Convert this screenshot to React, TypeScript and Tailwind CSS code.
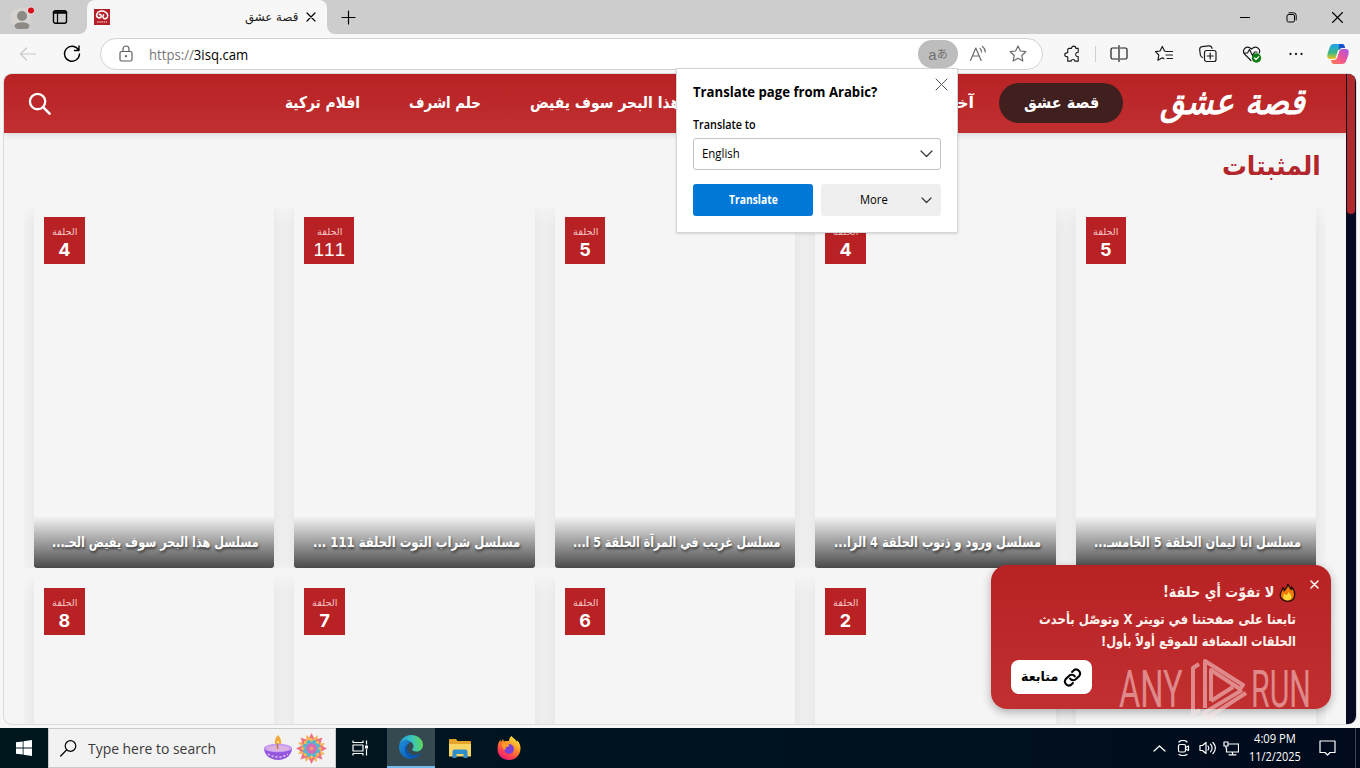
import React, { useLayoutEffect, useRef, useState } from "react";
import clsx from "clsx";

type FitProps = {
  children: React.ReactNode;
  className?: string;
  rtl?: boolean;
};

// Squeezes or stretches one line of text to the width of its box.
const Fit: React.FC<FitProps> = ({ children, className, rtl }) => {
  const outer = useRef<HTMLSpanElement>(null);
  const inner = useRef<HTMLSpanElement>(null);
  const [scale, setScale] = useState(1);

  useLayoutEffect(() => {
    if (!outer.current || !inner.current) return;
    setScale(outer.current.clientWidth / inner.current.offsetWidth);
  }, []);

  return (
    <span
      ref={outer}
      dir="ltr"
      className={clsx("block shrink-0 whitespace-nowrap", className)}
    >
      <span
        ref={inner}
        dir={rtl ? "rtl" : "ltr"}
        className="inline-block origin-left"
        style={{ transform: `scaleX(${scale})` }}
      >
        {children}
      </span>
    </span>
  );
};

const arabic = "font-['DejaVu_Sans',sans-serif]";
const ui = "font-['Open_Sans','Noto_Sans',sans-serif]";

type IconProps = {
  className?: string;
  children: React.ReactNode;
  box?: string;
};

const Icon: React.FC<IconProps> = ({
  className = "size-5",
  box = "0 0 20 20",
  children,
}) => (
  <svg
    viewBox={box}
    fill="none"
    stroke="currentColor"
    strokeWidth="1.2"
    strokeLinecap="round"
    strokeLinejoin="round"
    className={clsx("shrink-0", className)}
  >
    {children}
  </svg>
);

const TabStrip = () => (
  <div className="flex h-[34px] bg-[#f7f7f7]">
    <div className="flex w-[87px] items-center rounded-br-lg bg-[#cdcdcd] pl-[10px]">
      <svg viewBox="0 0 24 24" className="size-6">
        <circle cx="11" cy="13" r="10.5" fill="#d6d3d1" />
        <circle cx="12" cy="11" r="5" fill="#8d8985" />
        <ellipse cx="12" cy="21" rx="7.500" ry="3.800" fill="#8d8985" />
        <circle cx="21" cy="5.500" r="4" fill="#e8d6d6" />
        <circle cx="21" cy="5.500" r="3" fill="#d80f1e" />
      </svg>
      <Icon className="ml-[18px] size-4 text-black" box="0 0 16 16">
        <rect x="1.500" y="1.800" width="13" height="12.500" rx="2" strokeWidth="1.400" />
        <path d="M2 3.500h12" strokeWidth="2.600" />
        <path d="M5.500 4v10" />
      </Icon>
    </div>
    <div className="bg-[#cdcdcd]">
      <div className="flex h-[34px] w-[240px] items-center rounded-t-lg bg-[#f7f7f7] pl-[7px] text-[#1a1a1a]">
        <svg viewBox="0 0 16 16" className="size-4">
          <path d="M0 0h16v16H0z" fill="#b3202a" />
          <path
            d="M4 8.500C1.500 7 2.500 3 6 2.300c4-.8 8 1.200 7.700 4.700-.2 2.500-3 3.500-4.300 2-1-1.300-.4-3 .8-3.200M4 8.500c2 1 3.500-.2 3.200-2-.2-1.300-1.600-1.500-2.300-.5"
            fill="none"
            stroke="#fff"
            strokeWidth="1.500"
          />
          <path d="M3 13h10" stroke="#e8a3a5" strokeWidth="1.500" strokeDasharray="1.500 .7" />
        </svg>
        <Fit rtl className={clsx("ml-[135px] w-[53px] text-xs", arabic)}>
          قصة عشق
        </Fit>
        <Icon className="ml-[8px] size-[10px] text-black" box="0 0 10 10">
          <path d="m1 1 8 8M9 1 1 9" />
        </Icon>
      </div>
    </div>
    <div className="flex flex-1 justify-between rounded-bl-lg bg-[#cdcdcd] text-black">
      <div className="flex w-[42px] items-center justify-center">
        <Icon className="size-[15px]" box="0 0 15 15">
          <path d="M7.500 1v13M1 7.500h13" />
        </Icon>
      </div>
      <div className="flex">
        <div className="flex w-[46px] items-center justify-center">
          <Icon className="size-[10px]" box="0 0 10 10">
            <path d="M0 5.500h10" strokeWidth="1" />
          </Icon>
        </div>
        <div className="flex w-[46px] items-center justify-center">
          <Icon className="size-[11px]" box="0 0 11 11">
            <rect x="1" y="2.500" width="7.500" height="7.500" rx="1.500" strokeWidth="1" />
            <path d="M3 .8h4.500a2.700 2.700 0 0 1 2.700 2.700V8" strokeWidth="1" />
          </Icon>
        </div>
        <div className="flex w-[46px] items-center justify-center">
          <Icon className="size-[11px]" box="0 0 11 11">
            <path d="m.5.5 10 10M10.500.5l-10 10" strokeWidth="1.100" />
          </Icon>
        </div>
      </div>
    </div>
  </div>
);

const STAR = "m10 2 2.400 5 5.400.7-4 3.800 1 5.500-4.800-2.700L5.200 17l1-5.500-4-3.800L7.600 7z";

const Toolbar = () => (
  <div className="flex h-10 items-center bg-[#f7f7f7] text-[#1b1b1b]">
    <div className="flex w-[100px] shrink-0 items-center pl-[18px]">
      <Icon className="size-5 text-[#c8c8c8]">
        <path d="M17.500 10h-15M8.500 4l-6 6 6 6" />
      </Icon>
      <Icon className="ml-6 size-5 text-black">
        <path d="M16.500 6A7.500 7.500 0 1 0 17.500 10M17 2v4.500h-4.500" strokeWidth="1.400" />
      </Icon>
    </div>
    <div className="flex h-8 w-[943px] shrink-0 items-center rounded-full border border-[#d3d3d3] bg-white pl-[15px]">
      <Icon className="size-5 text-[#5f5f5f]">
        <rect x="4" y="7.500" width="12" height="9.500" rx="1.500" />
        <path d="M7 7.500V5a3 3 0 0 1 6 0v2.500" />
        <circle cx="10" cy="12.200" r=".5" fill="currentColor" />
      </Icon>
      <Fit className={clsx("ml-[13px] w-[99px] text-[15px] text-black", ui)}>
        <span className="text-[#777]">https://</span>3isq.cam
      </Fit>
      <div className="ml-auto flex items-center text-[#6b6b6b]">
        <div className="flex h-7 w-10 items-center justify-center rounded-full bg-[#bdbdbd] font-['Liberation_Sans','Noto_Sans_CJK_JP',sans-serif] text-[#707070]">
          <span className="text-[15px] leading-none">a</span>
          <span className="text-[11px] leading-none">あ</span>
        </div>
        <div className="flex w-10 justify-center">
          <Icon>
            <path d="M2.500 16.500 7.800 4l5.300 12.500M4.500 12h6.800M12 4.500c1 .8 1.500 2 1.500 3.500M14.500 2.500c1.900 1.500 2.800 3.200 2.800 5.500" />
          </Icon>
        </div>
        <div className="mr-1 flex w-10 justify-center">
          <Icon>
            <path d={STAR} />
          </Icon>
        </div>
      </div>
    </div>
    <div className="flex w-[52px] justify-center pl-[6px]">
      <Icon className="size-[19px]">
        <path d="M6 3.500h3c0-3 4.500-3 4.500 0H16v4.200c-3.500-.4-3.500 5 0 4.600V17H12.500c0-2.300-4-2.300-4 0H5v-4.500c-4.300 0-4.300-4.500 0-4.500V4.500z" />
      </Icon>
    </div>
    <div className="h-4 w-px bg-[#cfcfcf]" />
    <div className="flex w-[46px] justify-center">
      <Icon>
        <path d="M8.500 4H3.500Q2 4 2 5.500v8Q2 15 3.500 15h5M11.500 4h5Q18 4 18 5.500v8q0 1.500-1.500 1.500h-5M10 1.500v16" />
      </Icon>
    </div>
    <div className="flex w-[44px] justify-center">
      <Icon>
        <path d="M12.500 7.500 10.500 7 8.300 2.500 6 7l-4.500.7L4.800 11l-.9 5.200 4.400-2.400 1.500.8M13 7.500h5.500M12 11h6.500M13 14.500h5.500" />
      </Icon>
    </div>
    <div className="flex w-[44px] justify-center">
      <Icon>
        <rect x="6.500" y="6.500" width="11.500" height="11" rx="2" />
        <path d="M12.200 9v6M9.200 12h6M4.500 13.500C3 13 2.600 12 2.400 11L1.700 6C1.500 4 2.500 3 4 2.700l7-.9c1.500-.1 2.700.9 3 2.500" />
      </Icon>
    </div>
    <div className="flex w-[44px] justify-center">
      <Icon>
        <path d="M9 16.500 2.500 10C-.5 6 4.500.5 9.500 5c5-4.500 9.500.5 7.700 4M1.500 9h4l2-3.500 3 6L12.500 8H15" />
        <circle cx="14.500" cy="14" r="4.700" fill="#0f7b17" stroke="none" />
        <path d="m12.500 14 1.500 1.500 2.800-2.800" stroke="#fff" />
      </Icon>
    </div>
    <div className="flex w-[44px] justify-center">
      <Icon>
        <path d="M4.500 10h.01M10 10h.01M15.500 10h.01" strokeWidth="2.300" />
      </Icon>
    </div>
    <svg viewBox="0 0 24 24" className="ml-[8px] size-6 shrink-0">
      <defs>
        <linearGradient id="copA" x1="0" y1="0" x2="0" y2="1">
          <stop offset="0" stopColor="#1aa4ee" />
          <stop offset=".6" stopColor="#42b883" />
          <stop offset="1" stopColor="#f3c51d" />
        </linearGradient>
        <linearGradient id="copB" x1="1" y1="0" x2="0" y2="1">
          <stop offset="0" stopColor="#a557e8" />
          <stop offset=".5" stopColor="#ee5397" />
          <stop offset="1" stopColor="#ff7c4d" />
        </linearGradient>
      </defs>
      <path d="M8 2h8c2 0 2.500 1.500 3 4h-3c-2 0-2.700 1-3.300 3l-1.200 4c-.8 2.500-1.500 4-4 4H4c-3 0-3-3-2.300-6L3.500 6C4.300 3.500 5.500 2 8 2z" fill="url(#copA)" />
      <path d="M16 22H8c-2 0-2.500-1.500-3-4h3c2 0 2.700-1 3.300-3l1.200-4c.8-2.500 1.500-4 4-4H20c3 0 3 3 2.300 6l-1.800 5c-.8 2.500-2 4-4.500 4z" fill="url(#copB)" />
      <path d="M13 2h3c2 0 2.500 1.500 3 4h-3c-1.800 0-2.500.8-3.100 2.500z" fill="#1d50cc" />
      <path d="M13.500 8.200 10.700 16l-1-.2 2.600-8z" fill="#fff" />
    </svg>
  </div>
);

const SiteHeader = () => (
  <header
    dir="rtl"
    className={clsx(
      "flex h-[59px] shrink-0 items-center bg-linear-to-b from-[#b82224] to-[#c12f30] pr-[41px] pb-px pl-[24px] font-bold text-white shadow-[0_2px_6px_rgba(0,0,0,0.12)]",
      arabic,
    )}
  >
    <Fit rtl className="mb-[3px] w-[145px] text-[36px] leading-none italic">
      قصة عشق
    </Fit>
    <nav className="flex items-center text-[16px] leading-10">
      <div className="mr-[37px] flex h-10 w-[124px] justify-center rounded-full bg-[#40201f]">
        <Fit rtl className="w-[75px]">
          قصة عشق
        </Fit>
      </div>
      <Fit rtl className="mr-[25px] w-[27px]">
        آخر
      </Fit>
      <Fit rtl className="mr-[267px] w-[150px]">
        هذا البحر سوف يفيض
      </Fit>
      <Fit rtl className="mr-[49px] w-[72px]">
        حلم اشرف
      </Fit>
      <Fit rtl className="mr-[49px] w-[75px]">
        افلام تركية
      </Fit>
    </nav>
    <Icon className="mr-auto size-[23px]" box="0 0 24 24">
      <circle cx="10" cy="10" r="8" strokeWidth="2.400" />
      <path d="m16 16 6.500 6.500" strokeWidth="2.700" />
    </Icon>
  </header>
);

type Episode = {
  num?: string;
  title?: string;
};

const pinned: Episode[] = [
  { num: "4", title: "مسلسل هذا البحر سوف يفيض الحـ..." },
  { num: "111", title: "مسلسل شراب التوت الحلقة 111 ..." },
  { num: "5", title: "مسلسل غريب في المرآة الحلقة 5 ا..." },
  { num: "4", title: "مسلسل ورود و ذنوب الحلقة 4 الرا..." },
  { num: "5", title: "مسلسل انا ليمان الحلقة 5 الخامسـ..." },
];

const more: Episode[] = [
  { num: "8" },
  { num: "7" },
  { num: "6" },
  { num: "2" },
  {},
];

const Badge: React.FC<{ num: string }> = ({ num }) => {
  const wide = num.length > 1;
  return (
    <div
      className={clsx(
        "mt-[10px] ml-[10px] flex h-[47px] flex-col items-center self-start bg-[#b82224] pt-[9px] text-white",
        wide ? "w-[50px]" : "w-[40.5px]",
      )}
    >
      <Fit rtl className={clsx("w-[25px] text-[9px] leading-3 text-[#f3c6c6]", arabic)}>
        الحلقة
      </Fit>
      <span
        className={clsx(
          "leading-6",
          wide
            ? "font-['Liberation_Sans',sans-serif] text-[19px] [font-kerning:none]"
            : "font-['Inter',sans-serif] text-[18px] font-bold",
        )}
      >
        {num}
      </span>
    </div>
  );
};

const Card: React.FC<{ episode: Episode }> = ({ episode }) => (
  <article className="flex h-[361px] min-w-0 flex-1 flex-col justify-between overflow-hidden rounded-b-[3px] bg-[#f5f5f5] shadow-[0_5px_20px_rgba(0,0,0,0.1)]">
    {episode.num && <Badge num={episode.num} />}
    {episode.title && (
      <div className="flex h-[52px] items-center justify-end bg-linear-to-b from-transparent to-black/70 pr-[15px]">
        <Fit
          rtl
          className={clsx(
            "w-[207px] text-[14px] font-bold text-white text-shadow-[1px_2px_3px_rgba(0,0,0,0.6)]",
            arabic,
          )}
        >
          {episode.title}
        </Fit>
      </div>
    )}
  </article>
);

const CardRow: React.FC<{ items: Episode[] }> = ({ items }) => (
  <div className="mx-5 flex h-[361px] shrink-0 gap-5 overflow-hidden px-[10px]">
    {items.map((episode, index) => (
      <Card key={`episode-${index}-${episode.num}`} episode={episode} />
    ))}
  </div>
);

const TranslatePopup = () => (
  <div
    className={clsx(
      "absolute top-[68px] left-[676px] flex h-[165px] w-[282px] flex-col border border-[#d6d6d6] bg-white px-4 text-xs text-black shadow-sm",
      ui,
    )}
  >
    <div className="flex h-[46px] justify-between pt-[13px]">
      <Fit className="w-[184px] text-[13.500px] leading-5 font-bold">
        Translate page from Arabic?
      </Fit>
      <Icon className="-mt-[4px] -mr-[7px] size-[13px] text-[#555]" box="0 0 13 13">
        <path d="m1 1 11 11M12 1 1 12" strokeWidth="1" />
      </Icon>
    </div>
    <Fit className="w-[63px] text-[12px] leading-5 font-semibold">Translate to</Fit>
    <div className="mt-[3px] flex h-8 items-center justify-between rounded-[3px] border border-[#c2c2c2] px-2">
      <Fit className="w-[38px]">English</Fit>
      <Icon className="-mr-px h-[8px] w-[13px] text-[#333]" box="0 0 13 8">
        <path d="m1 1 5.500 5.500L12 1" />
      </Icon>
    </div>
    <div className="mt-[14px] flex gap-2">
      <button
        type="button"
        className="flex h-8 w-[120px] items-center justify-center rounded-[3px] bg-[#0078d7] font-bold text-white"
      >
        <Fit className="w-[49px]">Translate</Fit>
      </button>
      <button
        type="button"
        className="flex h-8 w-[120px] items-center justify-between rounded-[3px] bg-[#efefef] pr-[9px] pl-[39px]"
      >
        <Fit className="w-[28px]">More</Fit>
        <Icon className="h-[7px] w-[11px] text-[#333]" box="0 0 11 7">
          <path d="m1 1 4.500 4.500L10 1" />
        </Icon>
      </button>
    </div>
  </div>
);

const Toast = () => (
  <div
    dir="rtl"
    className={clsx(
      "absolute top-[565px] left-[991px] flex h-[144px] w-[340px] flex-col rounded-2xl bg-linear-to-b from-[#b82224] to-[#c12f30] pt-[15px] pl-5 font-bold text-[#fff3ee] shadow-[0_3px_10px_rgba(0,0,0,0.3)]",
      arabic,
    )}
  >
    <div className="flex h-6 items-center pr-3">
      <Icon className="-mt-4 ml-[14px] size-[9px]" box="0 0 9 9">
        <path d="m1 1 7 7M8 1 1 8" strokeWidth="1.600" />
      </Icon>
      <svg viewBox="0 0 17 20" className="h-[19px] w-[17px]">
        <path
          d="M9 .8c.4 3 2.500 4 3.300 6 .6-.5.900-1.200.8-2.200 2.300 2.500 3.200 5.300 3 8.200-.3 4-3.300 6.500-7.500 6.500S1 16.500.8 13C.7 9.500 3 8 3.800 5c1 .8 1.400 1.700 1.300 3C7.500 6 8.500 4 9 .8z"
          fill="#f27a0a"
          stroke="#1d0b05"
          strokeWidth="1.300"
        />
        <path d="M9.500 9c.5 2 3.500 3 3.200 6-.2 2-2 3.200-4.200 3.200S4 17 4 14.800c0-1.800 1-2.500 1.300-3.800l1.600 2C8.500 12 9.200 11 9.500 9z" fill="#ffd83a" />
      </svg>
      <Fit rtl className="mr-[5px] w-[111px] text-[15px]">
        لا تفوّت أي حلقة!
      </Fit>
    </div>
    <Fit rtl className="mt-1 mr-[35px] w-[257px] text-[13.500px] leading-[22px]">
      تابعنا على صفحتنا في تويتر X وتوصّل بأحدث
    </Fit>
    <Fit rtl className="mr-[35px] w-[195px] text-[13.500px] leading-[22px]">
      الحلقات المضافة للموقع أولاً بأول!
    </Fit>
    <button
      type="button"
      className="mt-2 mr-auto flex h-[34px] w-[81px] items-center gap-[5px] rounded-lg bg-white pr-[10px] text-black"
    >
      <Icon className="size-[19px]" box="0 0 24 24">
        <path
          d="M9 13.500a5 5 0 0 0 7.500.5l4-4A5 5 0 0 0 13.500 3l-2 2M15 10.500a5 5 0 0 0-7.500-.5l-4 4a5 5 0 0 0 7 7l2-2"
          strokeWidth="2.600"
        />
      </Icon>
      <Fit rtl className="w-[37px] text-[13px]">
        متابعة
      </Fit>
    </button>
  </div>
);

const Watermark = () => (
  <div className="absolute top-[656px] left-[1119px] flex h-16 items-center font-['Roboto',sans-serif] text-[52px] leading-none font-normal text-[#ffe6e6]/50">
    <Fit className="mt-[4px] w-[64px]">ANY</Fit>
    <svg
      viewBox="0 0 58 64"
      className="ml-[6px] h-16 w-[58px]"
      fill="none"
      stroke="currentColor"
      strokeWidth="4"
      strokeLinejoin="round"
    >
      <path d="M10 8 4 12v46l7-4M16 52V5l38 24-3 4-29-19v31M53 34 15 57l3 5 39-25M22 45l22-14" />
    </svg>
    <Fit className="mt-[4px] ml-[4px] w-[60px]">RUN</Fit>
  </div>
);

const Taskbar = () => (
  <div
    className={clsx(
      "flex h-10 items-center bg-linear-to-r from-[#00171e] via-[#001420] to-[#000a1c] text-white",
      ui,
    )}
  >
    <div className="flex w-12 justify-center">
      <svg viewBox="0 0 16 16" className="size-4" fill="#fff">
        <path d="M0 2.300 6.700 1.400v6.200H0zM7.500 1.300 16 0v7.600H7.500zM0 8.400h6.700v6.200L0 13.700zM7.500 8.400H16V16l-8.500-1.300z" />
      </svg>
    </div>
    <div className="flex h-10 w-[288px] items-center border border-[#c9c9c9] bg-[#f2f2f2] pl-[11px] text-[#3a3a3a]">
      <Icon className="size-[17px] text-black" box="0 0 17 17">
        <circle cx="10.500" cy="6" r="5.300" />
        <path d="M6.500 10 .7 16" />
      </Icon>
      <Fit className="ml-[11px] w-[128px] text-[15px]">Type here to search</Fit>
      <svg viewBox="0 0 28 26" className="ml-[48px] h-[26px] w-7">
        <path d="M14 0c-4 5-4 8-1 12h2c3-3 3-7-1-12z" fill="#f6a531" />
        <path d="M14 5c-2 3-1.500 5 0 7 1.500-2 1.500-4 0-7z" fill="#fff0a0" />
        <path d="M0 13c0 7 6 12 14 12s14-5 14-12z" fill="#9257dd" />
        <ellipse cx="14" cy="13" rx="14" ry="4.300" fill="#c79bf2" />
        <ellipse cx="14" cy="13.500" rx="11.500" ry="2.900" fill="#dcb2e2" />
        <path d="M13.500 8v6" stroke="#c47840" strokeWidth="1.500" />
        <path d="M4 19c6 4 14 4 20 0" fill="none" stroke="#e7caff" strokeWidth="1.500" strokeDasharray="2 2" />
      </svg>
      <svg viewBox="-15 -15 30 30" className="ml-1 size-[31px]">
        {[0, 45, 90, 135, 180, 225, 270, 315].map(angle => (
          <g key={`petal-${angle}`} transform={`rotate(${angle})`}>
            <path d="M0-15 4-7H-4z" fill="#ee6f83" />
            <path d="M5.500-13 7-6 1-8z" fill="#f5b55d" />
            <path d="M0-10.500 3.500-6 0-1-3.500-6z" fill="#f9bd4c" />
          </g>
        ))}
        {[0, 45, 90, 135, 180, 225, 270, 315].map(angle => (
          <ellipse
            key={`ring-${angle}`}
            cy="-5"
            rx="2.500"
            ry="3.700"
            fill="#58b5cf"
            transform={`rotate(${angle + 22})`}
          />
        ))}
        <circle r="5" fill="#d66ab8" />
        <circle r="2" fill="#f49a6e" />
      </svg>
    </div>
    <div className="flex w-[51px] justify-center pr-[2px]">
      <Icon className="h-[16px] w-[17px]" box="0 0 17 16">
        <path d="M1 .5v2h10v-2M1 15.500v-2h10v2M1 5h10v6H1zM14.500.5v4M14.500 9v6.500" strokeLinecap="butt" />
        <path d="M13 5.500h3v3h-3z" fill="currentColor" stroke="none" />
      </Icon>
    </div>
    <div className="flex h-10 w-12 items-center justify-center border-b-2 border-[#76b9ed] bg-[#354950]">
      <svg viewBox="0 0 24 24" className="size-6">
        <defs>
          <linearGradient id="edgeTop" x1="0" y1=".5" x2="1" y2=".4">
            <stop offset="0" stopColor="#2195dc" />
            <stop offset=".5" stopColor="#34c1c4" />
            <stop offset="1" stopColor="#62d957" />
          </linearGradient>
          <linearGradient id="edgeLow" x1="0" y1="0" x2="1" y2="1">
            <stop offset="0" stopColor="#1b8ee0" />
            <stop offset="1" stopColor="#0b4fa3" />
          </linearGradient>
        </defs>
        <path d="M0 11.500C.5 5 5.500 0 12 0c7 0 12 4.500 12 10 0 4-3 6.500-6.500 6.500-2.500 0-4.300-1-4.300-2 0-.8 1.300-1.200 1.300-3.300C14.500 8 11 5.500 7.300 5.500 4 5.500 1 8 0 11.500z" fill="url(#edgeTop)" />
        <path d="M0 12c.5-4 4-6.500 7.500-6.500 2 0 3.500.7 4.500 1.600-4 .9-5 5.500-3.500 9 1.500 3.400 6 5.400 11.500 3.400-2 3-5 4.500-8.500 4.500C5 24 0 18.500 0 12z" fill="url(#edgeLow)" />
        <path d="M9.800 8.500c-2.500 2.500-2.300 6.500-.3 9 2.700 3.400 8 4 12.700.5-1 1.700-1.800 2.700-2.800 3.400-4.600 1.900-9.600 1.200-12.100-2.400C4.500 15 6 10 9.800 8.500z" fill="#0a56ad" />
      </svg>
    </div>
    <div className="flex w-[49px] justify-center">
      <svg viewBox="0 0 22 19" className="h-[19px] w-[22px]">
        <path d="M0 1q0-1 1-1h6l1.500 2H21q1 0 1 1v14H0z" fill="#e5a52b" />
        <path d="M0 5h22v12.500H0z" fill="#fcd462" />
        <path d="M3.500 19v-6.500q0-2 2-2h11q2 0 2 2V19h-4v-4h-7v4z" fill="#2f8fcd" />
      </svg>
    </div>
    <div className="flex w-[49px] justify-center">
      <svg viewBox="0 0 24 24" className="size-6">
        <defs>
          <linearGradient id="fox" x1=".8" y1="0" x2=".2" y2="1">
            <stop offset="0" stopColor="#fff04c" />
            <stop offset=".4" stopColor="#ff9426" />
            <stop offset=".75" stopColor="#ff3b51" />
            <stop offset="1" stopColor="#e31587" />
          </linearGradient>
        </defs>
        <path d="M14.500 0c1 2 4 3 5 5.500l1-1c2 2.500 3.200 5 3 8.500C23 19.500 18.500 24 12 24S.5 19.500.5 13c0-4 1-7 3-9.500l.3 3L6 3l.8 2.500C9 4.700 11 5 12 5c0-2 1-4 2.500-5z" fill="url(#fox)" />
        <circle cx="12" cy="13" r="5" fill="#7b3fd8" />
        <path d="M5 8c3-1.500 5 0 7 .5 1 .5 0 2-2 2.300-1.500.4-2 2-1 3.500-3-1-4.500-3.500-4-6.300z" fill="#ff9b26" />
      </svg>
    </div>
    <div className="ml-auto flex h-10 items-center">
      <Icon className="h-[7px] w-[13px]" box="0 0 13 7">
        <path d="m1 6 5.500-5L12 6" />
      </Icon>
      <Icon className="ml-[11px] h-4 w-[13px]" box="0 0 13 16">
        <rect x="1.500" y="4.500" width="7" height="7.500" rx="1.500" />
        <path d="m8.500 7.500 3-1.500v4.500l-3-1.500M2 2C4-.2 8-.2 10 2M2 14.500c2 1.500 6 1.500 8 0" />
      </Icon>
      <Icon className="ml-[9px] h-[14px] w-[17px]" box="0 0 17 14">
        <path d="M1 4.500h2.500L7 1.500v11L3.500 9.500H1zM9 5c1 1.300 1 2.700 0 4M11.500 3.200c2 2.400 2 5.200 0 7.600M14 1.500c3 3.500 3 7.500 0 11" />
      </Icon>
      <Icon className="ml-[7px] h-[15px] w-4" box="0 0 16 15">
        <path d="M6 3h9.500v8H3.500V7M9.500 11v2.500M6 13.800h7M1 1h4v4H1zM3 5v2" />
      </Icon>
      <div className="ml-[10px] flex w-[52px] flex-col items-center text-xs leading-[18px]">
        <Fit className="w-[42px]">4:09 PM</Fit>
        <Fit className="w-[52px]">11/2/2025</Fit>
      </div>
      <Icon className="mr-[19px] ml-[18px] h-4 w-[17px]" box="0 0 17 16">
        <path d="M1 1h15v11.500h-5L8.500 15 6 12.500H1z" />
      </Icon>
      <div className="mr-1 h-10 w-px bg-[#3d4857]" />
    </div>
  </div>
);

const App: React.FC = () => (
  <div className="relative flex h-[768px] w-[1360px] flex-col overflow-hidden bg-[#f7f7f7]">
    <TabStrip />
    <Toolbar />
    <main className="mx-1 mb-1 flex h-[650px] overflow-hidden rounded-lg bg-[#f5f5f5] shadow-[0_0_0_1px_#dcdcdc]">
      <div className="flex w-[1342px] flex-col">
        <SiteHeader />
        <div className="flex h-[74px] shrink-0 justify-end pt-[13px] pr-[25px]">
          <Fit
            rtl
            className={clsx("w-[99px] text-[26px] leading-10 font-bold text-[#b3262b]", arabic)}
          >
            المثبتات
          </Fit>
        </div>
        <div className="flex flex-col gap-[10px]">
          <CardRow items={pinned} />
          <CardRow items={more} />
        </div>
      </div>
      <div className="w-[10px] bg-[#060b22] px-px">
        <div className="h-[140px] rounded-b-full bg-[#b0292d]" />
      </div>
    </main>
    <Taskbar />
    <TranslatePopup />
    <Toast />
    <Watermark />
  </div>
);

export default App;
